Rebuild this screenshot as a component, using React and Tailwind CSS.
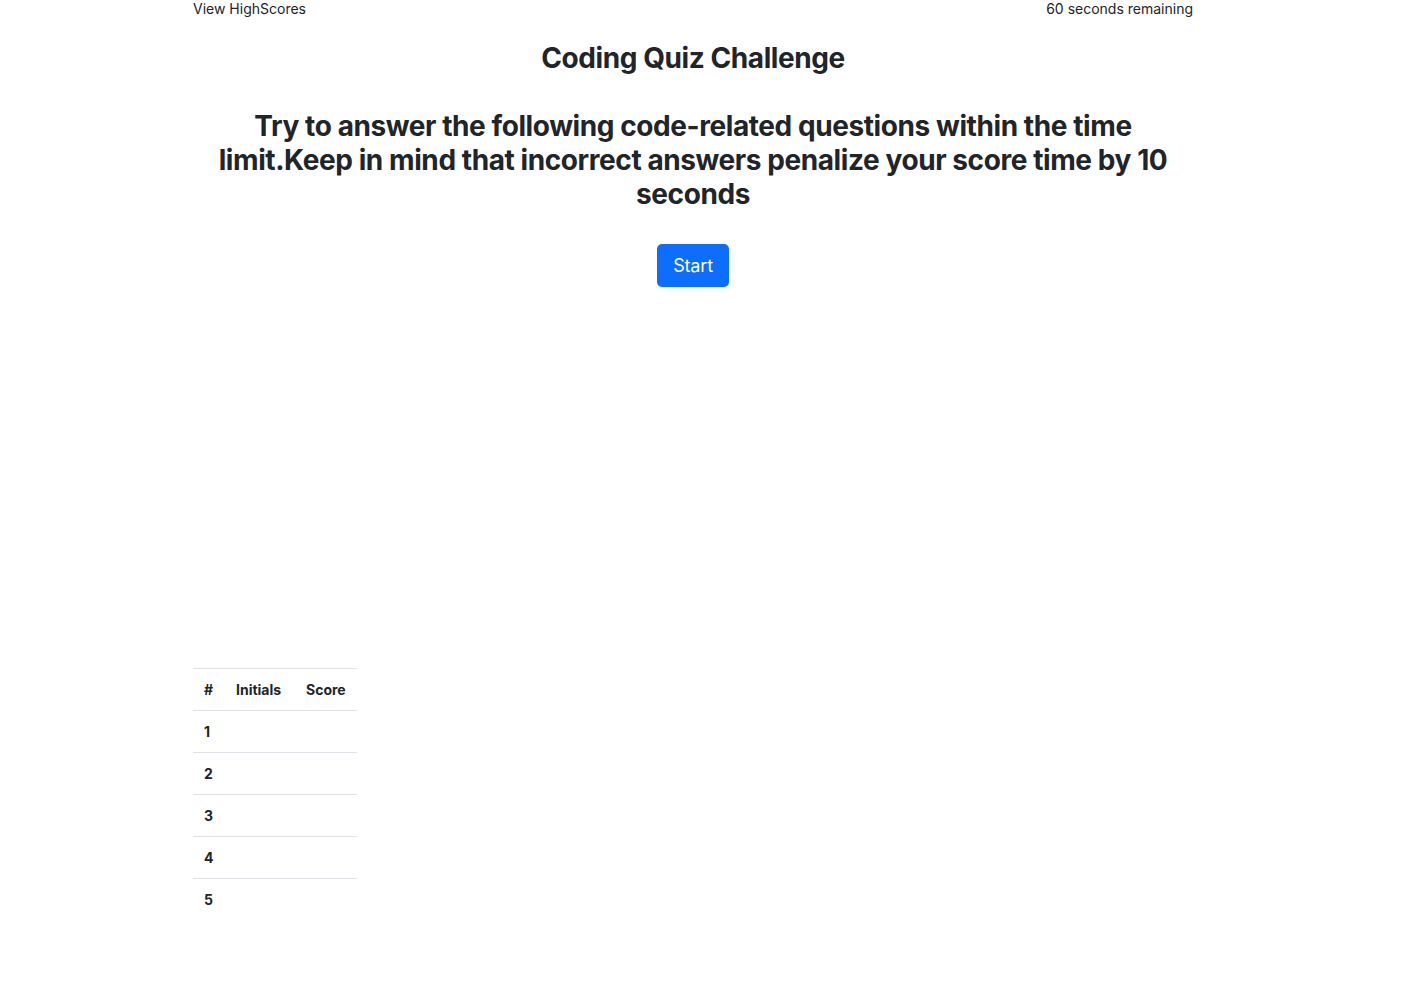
import React from 'react';

const rows = [1, 2, 3, 4, 5];

const App = () => {
    return (
        <div className="w-[1386px] min-h-screen bg-white text-[#212529]" style={{ fontFamily: 'Inter, "Noto Sans", sans-serif' }}>
            <div className="mx-auto w-[1000px]">
                {/* Top bar */}
                <div className="flex justify-between text-sm leading-[18px]">
                    <a className="cursor-pointer">View HighScores</a>
                    <span>60 seconds remaining</span>
                </div>

                {/* Intro */}
                <div className="text-center">
                    <h3 className="mt-[23px] text-[28px] leading-[34px] font-bold tracking-[-0.015em]">Coding Quiz Challenge</h3>
                    <h3 className="mt-[34px] text-[28px] leading-[34px] font-bold tracking-[-0.015em]">
                        Try to answer the following code-related questions within the time limit.Keep in mind that incorrect answers penalize your score time by 10 seconds
                    </h3>
                    <button className="mt-[33px] h-[43px] px-4 rounded-[5px] bg-[#0d6efd] text-white text-lg font-normal tracking-[-0.01em]">
                        Start
                    </button>
                </div>

                {/* Highscores */}
                <table className="mt-[381px] text-sm font-bold border-collapse table-fixed w-[164px]">
                    <thead>
                        <tr className="border-t border-[#dee2e6] h-[42px]">
                            <th className="w-[31px] pl-[11px] text-left font-bold">#</th>
                            <th className="w-[70px] pl-[12px] text-left font-bold">Initials</th>
                            <th className="w-[63px] pl-[12px] text-left font-bold">Score</th>
                        </tr>
                    </thead>
                    <tbody>
                        {rows.map((n) => (
                            <tr key={n} className="border-t border-[#dee2e6] h-[42px]">
                                <th className="pl-[11px] text-left font-bold">{n}</th>
                                <td></td>
                                <td></td>
                            </tr>
                        ))}
                    </tbody>
                </table>
            </div>
        </div>
    );
};

export default App;
